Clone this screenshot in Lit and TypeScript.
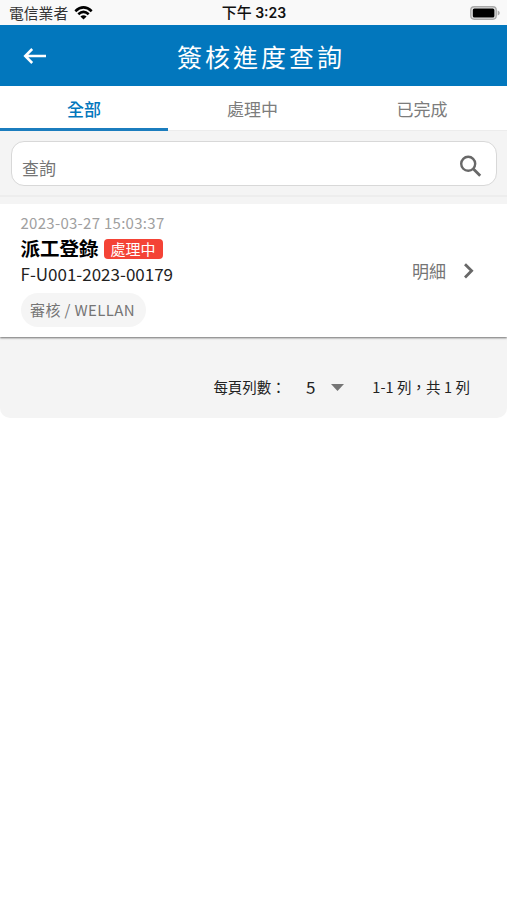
import { LitElement, html, css } from "lit";
import { customElement, state } from "lit/decorators.js";
import { classMap } from "lit/directives/class-map.js";

@customElement("status-bar")
class StatusBar extends LitElement {
  static styles = css`
    :host {
      display: grid;
      grid-template-columns: 1fr auto 1fr;
      align-items: center;
      height: 25px;
      padding: 0 7px 0 9px;
      box-sizing: border-box;
      background: #f9f9f9;
      color: #111;
      font-size: 15px;
      line-height: 24px;
    }
    .carrier {
      display: flex;
      align-items: center;
      gap: 6px;
      color: #333;
      font-size: 14.8px;
      white-space: nowrap;
    }
    .time {
      padding-right: 1px;
      font-weight: 500;
      white-space: nowrap;
    }
    .clock {
      font: 600 14px/24px Inter, sans-serif;
    }
    .battery {
      justify-self: end;
      margin-top: 1px;
    }
    svg {
      display: block;
    }
  `;

  render() {
    return html`
      <div class="carrier">
        <span>電信業者</span>
        <svg width="19" height="14" viewBox="0 0 19 14" fill="none" stroke="#000" stroke-width="2.6">
          <path d="M1.3 5.2Q9.5-2.4 17.7 5.2" />
          <path d="M4.3 8.3Q9.5 3.6 14.7 8.3" />
          <path d="M9.5 13.6 6.4 10.4Q9.5 8 12.6 10.4Z" fill="#000" stroke="none" />
        </svg>
      </div>
      <div class="time">下午 <span class="clock">3:23</span></div>
      <svg class="battery" width="30" height="14" viewBox="0 0 30 14">
        <rect x="0.8" y="0.8" width="25.4" height="12.4" rx="3.4" fill="#e6e6e6" stroke="#aaa" stroke-width="1.4" />
        <rect x="2.8" y="2.4" width="21.6" height="9.2" rx="1.6" fill="#000" />
        <path d="M27.7 4.4Q29.8 5.2 29.8 7T27.7 9.6Z" fill="#aaa" />
      </svg>
    `;
  }
}

@customElement("app-root")
class AppRoot extends LitElement {
  @state() private tab = 0;

  private tabs = ["全部", "處理中", "已完成"];

  static styles = css`
    :host {
      display: block;
      min-height: 900px;
      background: #fff;
      color: #222;
      font-family: "Noto Sans CJK TC", sans-serif;
    }
    * {
      box-sizing: border-box;
    }
    svg {
      display: block;
      flex: none;
    }
    .header {
      display: grid;
      grid-template-columns: 70px 1fr 70px;
      align-items: center;
      height: 61px;
      background: #0277bd;
      color: #fff;
    }
    .back {
      margin-left: 23px;
    }
    .title {
      margin: 0;
      padding-left: 15px;
      font-size: 25px;
      font-weight: 400;
      line-height: 60px;
      letter-spacing: 3px;
      text-align: center;
      white-space: nowrap;
    }
    .tabs {
      display: grid;
      grid-template-columns: 168px 169px 170px;
      height: 45px;
      border-bottom: 1px solid #ececec;
    }
    .tab {
      height: 45px;
      border-bottom: 3px solid transparent;
      color: #7c7c7c;
      font-size: 17px;
      line-height: 45px;
      text-align: center;
    }
    .tab.active {
      border-color: #1b7dbe;
      color: #0277bd;
      font-weight: 500;
    }
    .panel {
      background: #f4f4f4;
      border-radius: 0 0 10px 10px;
      height: 287px;
    }
    .search-area {
      height: 66px;
      padding: 10px 10px 0 11px;
      border-bottom: 2px solid #ededed;
    }
    .search {
      display: flex;
      align-items: center;
      justify-content: space-between;
      height: 45px;
      padding: 5px 13px 0 10px;
      border: 1px solid #d8d8d8;
      border-radius: 13px;
      background: #fff;
      color: #757575;
      font-size: 17px;
    }
    .search-text {
      line-height: 36px;
      padding-top: 3px;
    }
    .row {
      display: flex;
      justify-content: space-between;
      align-items: center;
      height: 133px;
      margin-top: 7px;
      padding: 0 29px 0 20.5px;
      background: #fff;
      box-shadow: 0 1px 2px rgba(0, 0, 0, 0.55);
      clip-path: inset(0 0 -4px 0);
    }
    .info {
      height: 133px;
      padding-top: 8px;
    }
    .date {
      color: #a0a0a0;
      font-size: 15px;
      line-height: 22px;
      letter-spacing: 0.28px;
    }
    .name {
      display: flex;
      align-items: center;
      gap: 5px;
      height: 27px;
      color: #000;
      font-size: 19.5px;
      font-weight: 700;
      line-height: 27px;
    }
    .badge {
      width: 59px;
      height: 20px;
      margin-top: 3px;
      border-radius: 4px;
      background: #f44336;
      color: #fff;
      font-size: 15px;
      font-weight: 400;
      line-height: 20px;
      text-align: center;
    }
    .number {
      font-size: 17px;
      line-height: 25px;
    }
    .chip {
      display: block;
      width: 125px;
      height: 34px;
      margin-top: 7px;
      padding: 0 9.5px;
      border-radius: 17px;
      background: #f5f5f5;
      color: #757575;
      font-size: 15px;
      line-height: 34px;
      letter-spacing: 0.38px;
      white-space: nowrap;
    }
    .detail {
      display: flex;
      align-items: center;
      gap: 16px;
      color: #757575;
      font-size: 17px;
      line-height: 24px;
    }
    .pager {
      display: flex;
      align-items: center;
      justify-content: flex-end;
      height: 60px;
      margin-top: 20px;
      padding-right: 37px;
      font-size: 14.5px;
      line-height: 24px;
      white-space: nowrap;
    }
    .size {
      margin: 0 16px 0 20px;
      font-size: 17px;
    }
    .range {
      margin-left: 28px;
      letter-spacing: 0.07px;
    }
  `;

  render() {
    return html`
      <status-bar></status-bar>
      <header class="header">
        <svg class="back" width="24" height="18" viewBox="0 0 24 18" fill="none" stroke="#fff" stroke-width="2.5">
          <path d="M23 9H2.8M9.2 2 2.2 9l7 7" />
        </svg>
        <h1 class="title">簽核進度查詢</h1>
      </header>
      <nav class="tabs">
        ${this.tabs.map(
          (label, i) => html`<div
            class=${classMap({ tab: true, active: i === this.tab })}
            @click=${() => (this.tab = i)}
          >${label}</div>`
        )}
      </nav>
      <main class="panel">
        <div class="search-area">
          <div class="search">
            <span class="search-text">查詢</span>
            <svg width="24" height="24" viewBox="0 0 24 24" fill="none" stroke="#686868" stroke-width="2.4">
              <circle cx="9.2" cy="9.8" r="7" />
              <path d="m14.2 14.8 7 7" stroke-width="2.8" />
            </svg>
          </div>
        </div>
        <article class="row">
          <div class="info">
            <div class="date">2023-03-27 15:03:37</div>
            <div class="name">派工登錄<span class="badge">處理中</span></div>
            <div class="number">F-U001-2023-00179</div>
            <div class="chip">審核 / WELLAN</div>
          </div>
          <div class="detail">
            <span>明細</span>
            <svg width="16" height="18" viewBox="0 0 16 18" fill="none" stroke="#686868" stroke-width="2.8">
              <path d="m3 2.2 6.6 6.6L3 15.4" />
            </svg>
          </div>
        </article>
        <footer class="pager">
          <span>每頁列數：</span>
          <span class="size">5</span>
          <svg width="13" height="7" viewBox="0 0 13 7"><path d="M0 0h13L6.5 7z" fill="#757575" /></svg>
          <span class="range">1-1 列，共 1 列</span>
        </footer>
      </main>
    `;
  }
}
